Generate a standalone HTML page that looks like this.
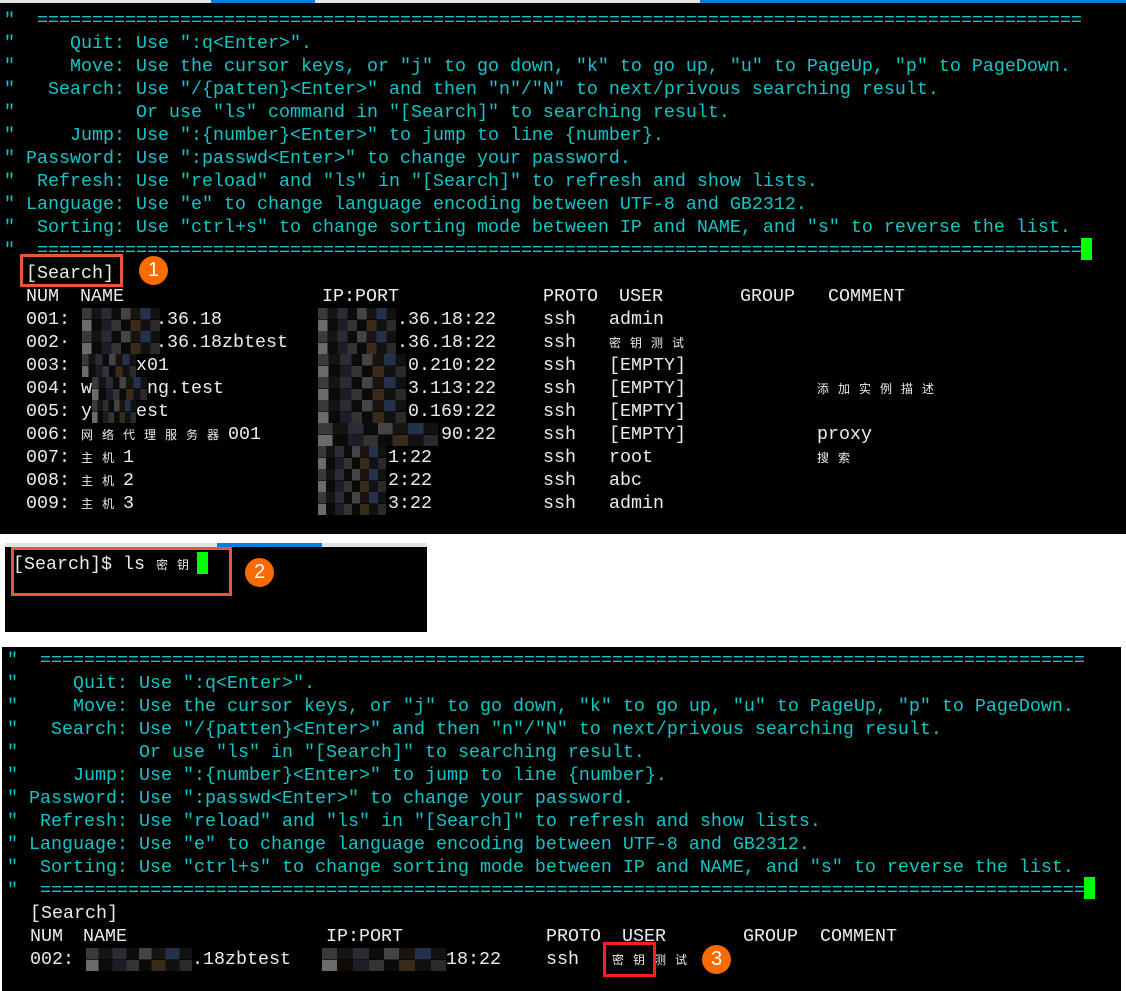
<!DOCTYPE html>
<html><head><meta charset="utf-8">
<style>
*{margin:0;padding:0;box-sizing:border-box}
body{width:1126px;height:991px;background:#fff;position:relative;overflow:hidden;font-family:"Liberation Mono","Noto Sans CJK SC",monospace;font-size:18.33px}
.p{position:absolute;background:#000;overflow:hidden}
.p>div{margin-top:2px}
.l{position:absolute;white-space:pre;line-height:23px;height:23px;color:#11c6c6}
.t{position:absolute;white-space:pre;line-height:23px;height:23px;color:#e8eeee}
.c{display:inline-block;width:21px;font-size:12px;vertical-align:top;line-height:24px;font-family:"Noto Sans CJK SC",sans-serif}
.mz{position:absolute;height:23px;background:
linear-gradient(90deg,#3a3a3a 0 12%,#141414 12% 25%,#2b2b33 25% 38%,#0c0c0c 38% 50%,#444 50% 62%,#1a1410 62% 75%,#23324a 75% 88%,#111 88%) top/100% 50% no-repeat,
linear-gradient(90deg,#6b6b6b 0 12%,#0e0a08 12% 25%,#1d1d2a 25% 38%,#333 38% 50%,#0a0a0a 50% 62%,#3a2a1a 62% 75%,#111 75% 88%,#2a2a2a 88%) bottom/100% 50% no-repeat}
.cur{position:absolute;background:#00ff00}
.box{position:absolute;border:3px solid #e8553a}
.num{position:absolute;width:29px;height:29px;border-radius:50%;background:#f76b00;color:#fff;font-family:"Liberation Sans",sans-serif;font-size:20px;text-align:center;line-height:29px}
</style></head><body>
<div style="position:absolute;left:0;top:0;width:1126px;height:3px;background:#e6e6e6"></div>
<div style="position:absolute;left:211px;top:0;width:104px;height:3px;background:#0a7fd8"></div>
<div style="position:absolute;left:700px;top:0;width:426px;height:3px;background:#0a7fd8"></div>

<div class="p" style="left:0;top:3px;width:1126px;height:531px">
<div class="l" style="left:4px;top:4px">"  ===============================================================================================</div>
<div class="l" style="left:4px;top:27px">"     Quit: Use ":q&lt;Enter&gt;".</div>
<div class="l" style="left:4px;top:50px">"     Move: Use the cursor keys, or "j" to go down, "k" to go up, "u" to PageUp, "p" to PageDown.</div>
<div class="l" style="left:4px;top:73px">"   Search: Use "/{patten}&lt;Enter&gt;" and then "n"/"N" to next/privous searching result.</div>
<div class="l" style="left:4px;top:96px">"           Or use "ls" command in "[Search]" to searching result.</div>
<div class="l" style="left:4px;top:119px">"     Jump: Use ":{number}&lt;Enter&gt;" to jump to line {number}.</div>
<div class="l" style="left:4px;top:142px">" Password: Use ":passwd&lt;Enter&gt;" to change your password.</div>
<div class="l" style="left:4px;top:165px">"  Refresh: Use "reload" and "ls" in "[Search]" to refresh and show lists.</div>
<div class="l" style="left:4px;top:188px">" Language: Use "e" to change language encoding between UTF-8 and GB2312.</div>
<div class="l" style="left:4px;top:211px">"  Sorting: Use "ctrl+s" to change sorting mode between IP and NAME, and "s" to reverse the list.</div>
<div class="l" style="left:4px;top:234px">"  ===============================================================================================</div>
<div class="cur" style="left:1081px;top:233px;width:11px;height:22px"></div>
<div class="t" style="left:26px;top:257px">[Search]</div>
<div class="t" style="left:26px;top:280px">NUM</div><div class="t" style="left:80px;top:280px">NAME</div><div class="t" style="left:322px;top:280px">IP:PORT</div><div class="t" style="left:543px;top:280px">PROTO</div><div class="t" style="left:619px;top:280px">USER</div><div class="t" style="left:740px;top:280px">GROUP</div><div class="t" style="left:828px;top:280px">COMMENT</div>

<div class="t" style="left:26px;top:303px">001:</div><div class="mz" style="left:82px;top:303px;width:78px"></div><div class="t" style="left:156px;top:303px">.36.18</div><div class="mz" style="left:318px;top:303px;width:78px"></div><div class="t" style="left:397px;top:303px">.36.18:22</div><div class="t" style="left:543px;top:303px">ssh</div><div class="t" style="left:609px;top:303px">admin</div>
<div class="t" style="left:26px;top:326px">002·</div><div class="mz" style="left:82px;top:326px;width:78px"></div><div class="t" style="left:156px;top:326px">.36.18zbtest</div><div class="mz" style="left:318px;top:326px;width:78px"></div><div class="t" style="left:397px;top:326px">.36.18:22</div><div class="t" style="left:543px;top:326px">ssh</div><div class="t" style="left:609px;top:326px"><span class="c">密</span><span class="c">钥</span><span class="c">测</span><span class="c">试</span></div>
<div class="t" style="left:26px;top:349px">003:</div><div class="mz" style="left:82px;top:349px;width:54px"></div><div class="t" style="left:136px;top:349px">x01</div><div class="mz" style="left:318px;top:349px;width:88px"></div><div class="t" style="left:408px;top:349px">0.210:22</div><div class="t" style="left:543px;top:349px">ssh</div><div class="t" style="left:609px;top:349px">[EMPTY]</div>
<div class="t" style="left:26px;top:372px">004: w</div><div class="mz" style="left:92px;top:372px;width:55px"></div><div class="t" style="left:147px;top:372px">ng.test</div><div class="mz" style="left:318px;top:372px;width:88px"></div><div class="t" style="left:408px;top:372px">3.113:22</div><div class="t" style="left:543px;top:372px">ssh</div><div class="t" style="left:609px;top:372px">[EMPTY]</div><div class="t" style="left:817px;top:372px"><span class="c">添</span><span class="c">加</span><span class="c">实</span><span class="c">例</span><span class="c">描</span><span class="c">述</span></div>
<div class="t" style="left:26px;top:395px">005: y</div><div class="mz" style="left:92px;top:395px;width:44px"></div><div class="t" style="left:136px;top:395px">est</div><div class="mz" style="left:318px;top:395px;width:88px"></div><div class="t" style="left:408px;top:395px">0.169:22</div><div class="t" style="left:543px;top:395px">ssh</div><div class="t" style="left:609px;top:395px">[EMPTY]</div>
<div class="t" style="left:26px;top:418px">006: <span class="c">网</span><span class="c">络</span><span class="c">代</span><span class="c">理</span><span class="c">服</span><span class="c">务</span><span class="c">器</span>001</div><div class="mz" style="left:318px;top:418px;width:120px"></div><div class="t" style="left:441px;top:418px">90:22</div><div class="t" style="left:543px;top:418px">ssh</div><div class="t" style="left:609px;top:418px">[EMPTY]</div><div class="t" style="left:817px;top:418px">proxy</div>
<div class="t" style="left:26px;top:441px">007: <span class="c">主</span><span class="c">机</span>1</div><div class="mz" style="left:318px;top:441px;width:68px"></div><div class="t" style="left:388px;top:441px">1:22</div><div class="t" style="left:543px;top:441px">ssh</div><div class="t" style="left:609px;top:441px">root</div><div class="t" style="left:817px;top:441px"><span class="c">搜</span><span class="c">索</span></div>
<div class="t" style="left:26px;top:464px">008: <span class="c">主</span><span class="c">机</span>2</div><div class="mz" style="left:318px;top:464px;width:68px"></div><div class="t" style="left:388px;top:464px">2:22</div><div class="t" style="left:543px;top:464px">ssh</div><div class="t" style="left:609px;top:464px">abc</div>
<div class="t" style="left:26px;top:487px">009: <span class="c">主</span><span class="c">机</span>3</div><div class="mz" style="left:318px;top:487px;width:68px"></div><div class="t" style="left:388px;top:487px">3:22</div><div class="t" style="left:543px;top:487px">ssh</div><div class="t" style="left:609px;top:487px">admin</div>
</div>
<div class="box" style="left:20px;top:254px;width:103px;height:33px"></div>
<div class="num" style="left:139px;top:256px">1</div>

<div style="position:absolute;left:5px;top:543px;width:422px;height:4px;background:#e2e2e2"></div>
<div style="position:absolute;left:217px;top:543px;width:105px;height:4px;background:#0a7fd8"></div>
<div class="p" style="left:5px;top:547px;width:422px;height:85px">
<div class="t" style="left:8px;top:4px">[Search]$ ls <span class="c">密</span><span class="c">钥</span></div>
<div class="cur" style="left:192px;top:3px;width:11px;height:22px"></div>
</div>
<div class="box" style="left:11px;top:547px;width:221px;height:49px"></div>
<div class="num" style="left:245px;top:558px">2</div>

<div class="p" style="left:2px;top:647px;width:1119px;height:344px">
<div class="l" style="left:5px;top:0px">"  ===============================================================================================</div>
<div class="l" style="left:5px;top:23px">"     Quit: Use ":q&lt;Enter&gt;".</div>
<div class="l" style="left:5px;top:46px">"     Move: Use the cursor keys, or "j" to go down, "k" to go up, "u" to PageUp, "p" to PageDown.</div>
<div class="l" style="left:5px;top:69px">"   Search: Use "/{patten}&lt;Enter&gt;" and then "n"/"N" to next/privous searching result.</div>
<div class="l" style="left:5px;top:92px">"           Or use "ls" in "[Search]" to searching result.</div>
<div class="l" style="left:5px;top:115px">"     Jump: Use ":{number}&lt;Enter&gt;" to jump to line {number}.</div>
<div class="l" style="left:5px;top:138px">" Password: Use ":passwd&lt;Enter&gt;" to change your password.</div>
<div class="l" style="left:5px;top:161px">"  Refresh: Use "reload" and "ls" in "[Search]" to refresh and show lists.</div>
<div class="l" style="left:5px;top:184px">" Language: Use "e" to change language encoding between UTF-8 and GB2312.</div>
<div class="l" style="left:5px;top:207px">"  Sorting: Use "ctrl+s" to change sorting mode between IP and NAME, and "s" to reverse the list.</div>
<div class="l" style="left:5px;top:230px">"  ===============================================================================================</div>
<div class="cur" style="left:1082px;top:228px;width:11px;height:22px"></div>
<div class="t" style="left:28px;top:253px">[Search]</div>
<div class="t" style="left:28px;top:276px">NUM</div><div class="t" style="left:81px;top:276px">NAME</div><div class="t" style="left:324px;top:276px">IP:PORT</div><div class="t" style="left:544px;top:276px">PROTO</div><div class="t" style="left:620px;top:276px">USER</div><div class="t" style="left:741px;top:276px">GROUP</div><div class="t" style="left:818px;top:276px">COMMENT</div>
<div class="t" style="left:28px;top:299px">002:</div><div class="mz" style="left:84px;top:299px;width:106px"></div><div class="t" style="left:190px;top:299px">.18zbtest</div><div class="mz" style="left:320px;top:299px;width:124px"></div><div class="t" style="left:444px;top:299px">18:22</div><div class="t" style="left:544px;top:299px">ssh</div><div class="t" style="left:610px;top:299px"><span class="c">密</span><span class="c">钥</span><span class="c">测</span><span class="c">试</span></div>
</div>
<div class="box" style="left:603px;top:942px;width:53px;height:35px;border-color:#ff1e1e"></div>
<div class="num" style="left:702px;top:945px">3</div>
</body></html>
